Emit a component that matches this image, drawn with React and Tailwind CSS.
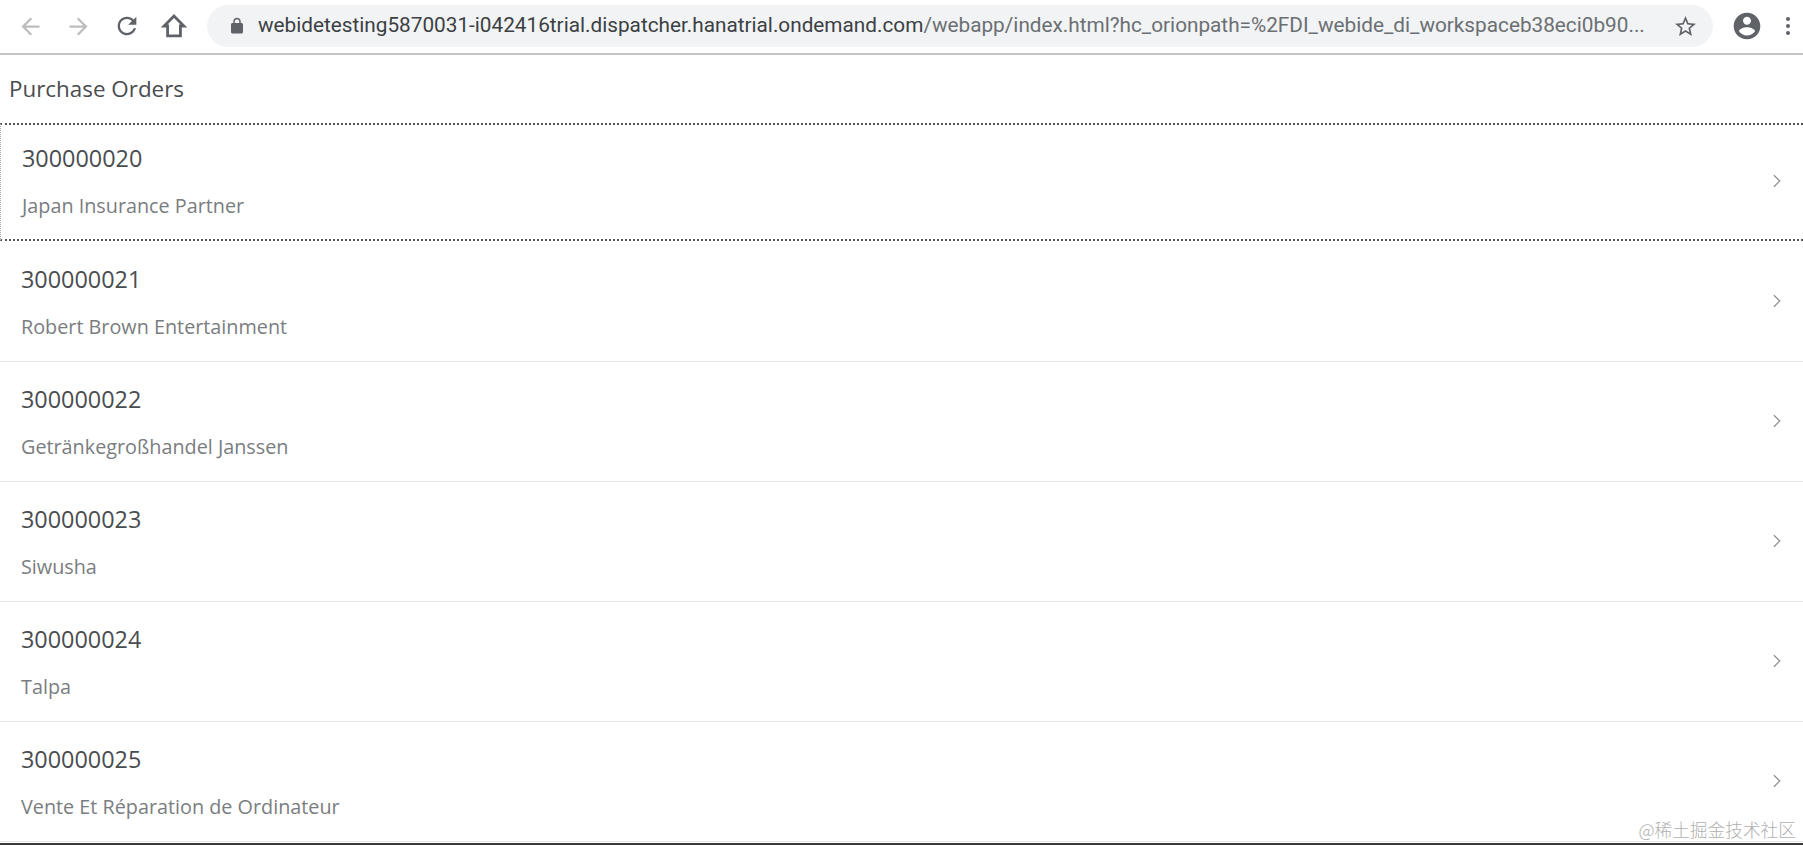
import { ChevronRight } from "lucide-react";

const orders = [
  { id: "300000020", name: "Japan Insurance Partner" },
  { id: "300000021", name: "Robert Brown Entertainment" },
  { id: "300000022", name: "Getränkegroßhandel Janssen" },
  { id: "300000023", name: "Siwusha" },
  { id: "300000024", name: "Talpa" },
  { id: "300000025", name: "Vente Et Réparation de Ordinateur" },
];

function Icon({ d, className }) {
  return (
    <svg viewBox="0 0 24 24" className={className} fill="currentColor">
      <path d={d} />
    </svg>
  );
}

function Toolbar() {
  return (
    <div className="flex h-[55px] items-center border-b-2 border-[#c4c4c4] bg-white pb-[1px]">
      <div className="flex w-[207px] shrink-0 items-center pl-[17px]">
        <Icon className="h-[27px] w-[27px] text-[#bdbdbd]" d="M20 11H7.83l5.59-5.59L12 4l-8 8 8 8 1.41-1.41L7.83 13H20v-2z" />
        <Icon className="ml-[21px] h-[27px] w-[27px] text-[#bdbdbd]" d="M4 13h12.17l-5.59 5.59L12 20l8-8-8-8-1.41 1.41L16.17 11H4v2z" />
        <Icon className="ml-[21px] h-[28px] w-[28px] text-[#5f6368]" d="M17.65 6.35C16.2 4.9 14.21 4 12 4c-4.42 0-7.99 3.58-7.99 8s3.57 8 7.99 8c3.73 0 6.84-2.55 7.73-6h-2.08c-.82 2.33-3.04 4-5.65 4-3.31 0-6-2.69-6-6s2.69-6 6-6c1.66 0 3.14.69 4.22 1.78L13 11h7V4l-2.35 2.35z" />
        <svg viewBox="0 0 24 24" className="ml-[19px] h-[28px] w-[28px] text-[#5f6368]" fill="none" stroke="currentColor" strokeWidth="2.4">
          <path d="M12 3.5 3.5 12H6.5v8.5h11V12h3z" strokeLinejoin="miter" />
        </svg>
      </div>
      <div className="flex h-[42px] w-[1506px] items-center rounded-full bg-[#f1f3f4] pl-[21px] pr-[15px]">
        <Icon className="h-[18px] w-[18px] shrink-0 text-[#5f6368]" d="M18 8h-1V6c0-2.76-2.24-5-5-5S7 3.24 7 6v2H6c-1.1 0-2 .9-2 2v10c0 1.1.9 2 2 2h12c1.1 0 2-.9 2-2V10c0-1.1-.9-2-2-2zM9 6c0-1.66 1.34-3 3-3s3 1.34 3 3v2H9V6z" />
        <div className="ml-[12px] flex-1 whitespace-nowrap font-['Roboto',sans-serif] text-[20.75px] text-[#6b6f73]">
          <span className="text-[#3c4043]">webidetesting5870031-i042416trial.dispatcher.hanatrial.ondemand.com</span>
          /webapp/index.html?hc_orionpath=%2FDI_webide_di_workspaceb38eci0b90...
        </div>
        <Icon className="h-[25px] w-[25px] shrink-0 text-[#5f6368]" d="M22 9.24l-7.19-.62L12 2 9.19 8.63 2 9.24l5.46 4.73L5.82 21 12 17.27 18.18 21l-1.63-7.03L22 9.24zM12 15.4l-3.76 2.27 1-4.28-3.32-2.88 4.38-.38L12 6.1l1.71 4.04 4.38.38-3.32 2.88 1 4.28L12 15.4z" />
      </div>
      <Icon className="ml-[18px] h-[32px] w-[32px] shrink-0 text-[#5f6368]" d="M12 2C6.48 2 2 6.48 2 12s4.48 10 10 10 10-4.48 10-10S17.52 2 12 2zm0 3c1.66 0 3 1.34 3 3s-1.34 3-3 3-3-1.34-3-3 1.34-3 3-3zm0 14.2c-2.5 0-4.71-1.28-6-3.22.03-1.99 4-3.08 6-3.08 1.99 0 5.97 1.09 6 3.08-1.29 1.94-3.5 3.22-6 3.22z" />
      <div className="ml-[23px] flex flex-col gap-[3px]">
        <span className="h-[4px] w-[4px] rounded-full bg-[#5f6368]" />
        <span className="h-[4px] w-[4px] rounded-full bg-[#5f6368]" />
        <span className="h-[4px] w-[4px] rounded-full bg-[#5f6368]" />
      </div>
    </div>
  );
}

function OrderRow({ order, focused }) {
  return (
    <div
      className={`flex items-center justify-between bg-white pl-[21px] pr-[15px] ${
        focused
          ? "mb-[1px] h-[118px] border-y-2 border-l border-dotted border-y-[#555] border-l-[#aaa]"
          : "h-[120px] border-b border-[#e5e5e5]"
      }`}
    >
      <div className={focused ? "pb-[3px]" : "pb-[1px]"}>
        <div className="text-[23.4px] leading-[30px] text-[#4a4d50]">{order.id}</div>
        <div className="mt-[21px] text-[19.8px] leading-[24px] text-[#7a7d80]">{order.name}</div>
      </div>
      <ChevronRight className="mb-[2px] h-[22px] w-[22px] text-[#8c8c8c]" strokeWidth={1.25} />
    </div>
  );
}

export default function App() {
  return (
    <div className="relative flex h-[845px] w-full flex-col overflow-hidden bg-white font-['Open_Sans',sans-serif]">
      <Toolbar />
      <div className="flex h-[68px] items-center pl-[9px] text-[22.4px] text-[#4a4d50]">Purchase Orders</div>
      <div className="flex-1">
        {orders.map((order, index) => (
          <OrderRow key={order.id} order={order} focused={index === 0} />
        ))}
      </div>
      <div className="h-[2px] bg-[#3a3a3a]" />
      <div className="absolute bottom-[4px] right-[7px] font-['Noto_Sans_CJK_SC',sans-serif] text-[17.7px] font-light leading-[24px] text-[#b0b0b0]">
        @稀土掘金技术社区
      </div>
    </div>
  );
}
